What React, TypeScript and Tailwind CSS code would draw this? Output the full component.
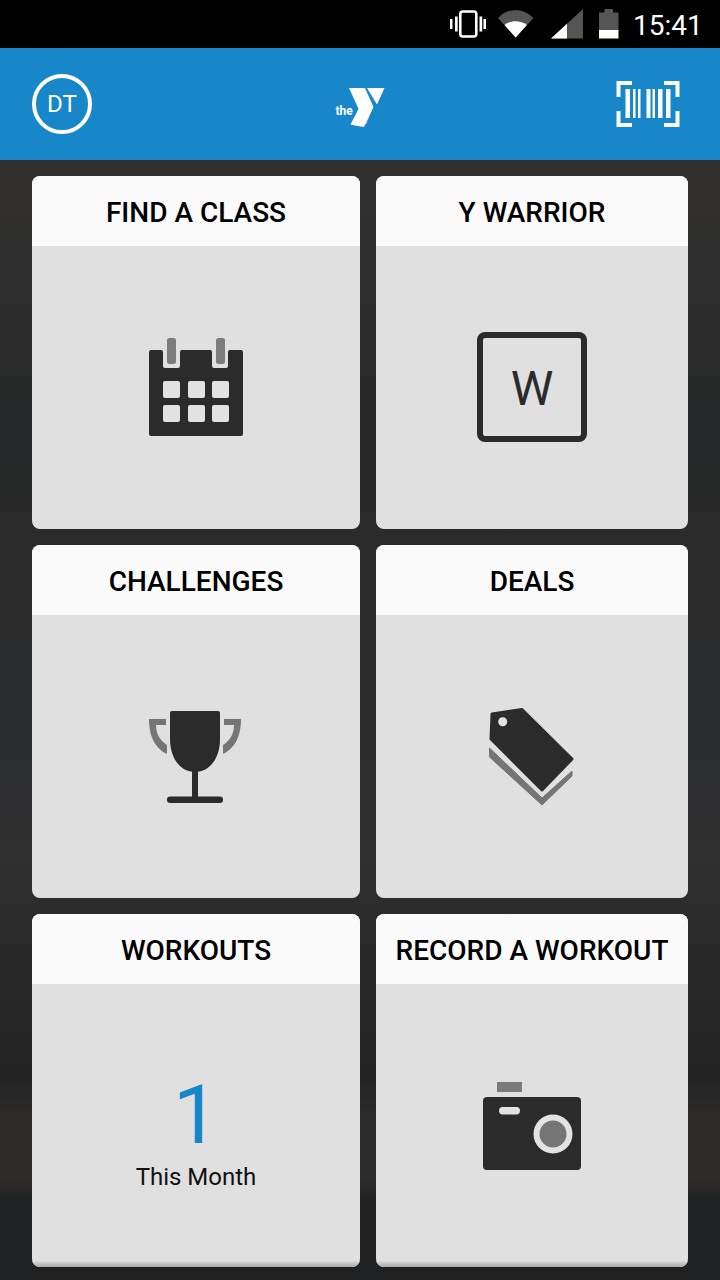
import type { ReactNode } from "react";

const Vibrate = () => (
  <svg width="36" height="28" viewBox="450 10 36 28" fill="#fff">
    <rect x="450" y="19" width="2.5" height="10" />
    <rect x="455" y="16.5" width="2.7" height="15" />
    <rect x="460.3" y="11.5" width="16" height="25" rx="2.5" fill="none" stroke="#fff" strokeWidth="2.6" />
    <rect x="479.5" y="16.5" width="2.7" height="15" />
    <rect x="483.5" y="19" width="2.5" height="10" />
  </svg>
);

const Wifi = () => (
  <svg width="36" height="28" viewBox="499 10 36 28">
    <path d="M499 18 C509 7.5 524 7.5 534.500 18 L516.700 37.500 Z" fill="#555" />
    <path d="M505.500 25 C511.500 20 521.500 20 527.800 25 L516.700 37.500 Z" fill="#fff" />
  </svg>
);

const Signal = () => (
  <svg width="32" height="30" viewBox="552 9 32 30">
    <path d="M552 38.500 L584 9 V38.500 Z" fill="#555" />
    <path d="M552 38.500 L568 23.700 V38.500 Z" fill="#fff" />
  </svg>
);

const Battery = () => (
  <svg width="20" height="30" viewBox="600 9 20 30">
    <path d="M600 12.500 H605.500 V9 H614 V12.500 H619.500 V30 H600 Z" fill="#555" />
    <rect x="600" y="30" width="19.500" height="8.500" fill="#fff" />
  </svg>
);

const Logo = () => (
  <svg width="80" height="60" viewBox="320 70 80 60" fill="#fff">
    <path d="M349 84 H365 L373.500 103 L364 123 Q357 122 350.500 120.500 L358.500 105 Z" />
    <path d="M367 84 H384.500 L377 100.500 Z" />
    <text x="335.500" y="110.500" fontSize="12" fontWeight="700">the</text>
    <text x="366" y="121" fontSize="4" transform="rotate(-70 366 121)">YMCA</text>
  </svg>
);

const Barcode = () => (
  <svg width="64" height="46" viewBox="616 81 64 46" fill="#fff">
    <path d="M632 83 H618.500 V97 M664 83 H677.500 V97 M632 125 H618.500 V111 M664 125 H677.500 V111" fill="none" stroke="#fff" strokeWidth="4" />
    <rect x="625.500" y="89" width="4.500" height="29" />
    <rect x="633" y="89" width="2.500" height="29" />
    <rect x="638" y="89" width="2.500" height="29" />
    <rect x="646.500" y="89" width="4" height="29" />
    <rect x="652.500" y="89" width="2.500" height="29" />
    <rect x="658" y="89" width="4.500" height="29" />
    <rect x="666" y="89" width="4.500" height="29" />
  </svg>
);

const CalendarIcon = () => (
  <svg width="94" height="98" viewBox="0 0 94 98" className="mb-px">
    <path
      d="M0 14 Q0 12 2 12 H12 Q14 12 14 14 V28 Q14 30 16 30 H29 Q31 30 31 28 V14 Q31 12 33 12 H61 Q63 12 63 14 V28 Q63 30 65 30 H77 Q79 30 79 28 V14 Q79 12 81 12 H92 Q94 12 94 14 V96 Q94 98 92 98 H2 Q0 98 0 96 Z"
      fill="#2b2b2b"
    />
    <rect x="18" y="0" width="9" height="26" rx="2.500" fill="#7b7b7b" />
    <rect x="67" y="0" width="9" height="26" rx="2.500" fill="#7b7b7b" />
    {[43, 67].map((y) =>
      [14, 39, 63].map((x) => (
        <rect key={`${x}-${y}`} x={x} y={y} width="17" height="17" rx="2" fill="#e2e2e2" />
      )),
    )}
  </svg>
);

const TrophyIcon = () => (
  <svg width="92" height="92" viewBox="0 0 92 92" className="mr-[2px]">
    <path d="M0 8 H17 V14 H7 C7 24 12 30 18 34 V43 C8 38 0 28 0 8 Z" fill="#757575" />
    <path d="M92 8 H75 V14 H85 C85 24 80 30 74 34 V43 C84 38 92 28 92 8 Z" fill="#757575" />
    <path d="M21 2 Q21 0 23 0 H69 Q71 0 71 2 V28 C71 48 60 61 46 61 C32 61 21 48 21 28 Z" fill="#2b2b2b" />
    <rect x="43" y="60" width="6" height="27" fill="#2b2b2b" />
    <rect x="18" y="85.500" width="56" height="6.500" rx="3" fill="#2b2b2b" />
  </svg>
);

const TagIcon = () => (
  <svg width="86" height="100" viewBox="0 0 86 100" className="mr-[2px]">
    <path
      d="M1.500 41 L54 91 L84 64 V69 L54 98 L1.500 50 Z"
      fill="#757575"
      stroke="#757575"
      strokeWidth="1"
      strokeLinejoin="round"
    />
    <path
      d="M4 7 L34 2.500 L84 52 L54 83 L3 32 Z"
      fill="#2b2b2b"
      stroke="#2b2b2b"
      strokeWidth="3"
      strokeLinejoin="round"
    />
    <circle cx="14.700" cy="14.700" r="4.500" fill="#e2e2e2" />
  </svg>
);

const CameraIcon = () => (
  <svg width="98" height="88" viewBox="0 0 98 88">
    <rect x="14" y="0" width="25" height="10" fill="#7b7b7b" />
    <rect x="0" y="15" width="98" height="73" rx="4" fill="#2b2b2b" />
    <rect x="16" y="25" width="21" height="7.500" rx="3.700" fill="#e2e2e2" />
    <circle cx="70" cy="52" r="19.500" fill="#e2e2e2" />
    <circle cx="70" cy="52" r="13.500" fill="#757575" />
  </svg>
);

const Tile = ({
  title,
  shaded,
  children,
}: {
  title: string;
  shaded?: boolean;
  children: ReactNode;
}) => (
  <div className="relative flex flex-col overflow-hidden rounded-lg bg-[#e0e0e0]">
    <div className="flex h-[70px] items-center justify-center bg-[#fafafa] pt-1 text-[28px] font-medium text-black">
      {title}
    </div>
    <div className="flex flex-1 items-center justify-center">{children}</div>
    {shaded && (
      <div className="absolute inset-x-0 bottom-0 h-[6px] bg-gradient-to-b from-[#dedede] to-[#a6a6a6]" />
    )}
  </div>
);

const App = () => {
  return (
    <div className="flex h-[1280px] w-[720px] flex-col overflow-hidden bg-[#2a2a2a] font-['Roboto',sans-serif]">
      <div className="flex h-12 items-center bg-black pl-[450px] text-white">
        <Vibrate />
        <div className="ml-3">
          <Wifi />
        </div>
        <div className="ml-[17px]">
          <Signal />
        </div>
        <div className="ml-4">
          <Battery />
        </div>
        <span className="ml-[14px] pt-1 text-[28px] leading-none">15:41</span>
      </div>

      <div className="grid h-[112px] grid-cols-[1fr_auto_1fr] items-center bg-[#1787c9] px-8">
        <div className="flex h-[60px] w-[60px] items-center justify-center rounded-full border-4 border-white text-2xl text-white">
          DT
        </div>
        <Logo />
        <div className="mr-2 justify-self-end">
          <Barcode />
        </div>
      </div>

      <div className="flex-1 bg-[linear-gradient(180deg,#33312f_0%,#2e2e2e_10%,#262728_25%,#2b2b2b_35%,#2a2b2d_50%,#303031_62%,#282828_72%,#232323_82%,#2e2c2a_86%,#2e2c2a_91%,#202123_93%,#202123_100%)] pl-8 pt-4">
        <div className="grid grid-cols-[328px_312px] grid-rows-[353px_353px_353px] gap-4">
          <Tile title="FIND A CLASS">
            <CalendarIcon />
          </Tile>
          <Tile title="Y WARRIOR">
            <div className="mb-px flex h-[110px] w-[110px] items-center justify-center rounded-lg border-[6px] border-[#2b2b2b] pt-[3px] text-5xl text-[#2b2b2b]">
              W
            </div>
          </Tile>
          <Tile title="CHALLENGES">
            <TrophyIcon />
          </Tile>
          <Tile title="DEALS">
            <TagIcon />
          </Tile>
          <Tile title="WORKOUTS" shaded>
            <div className="flex flex-col items-center pt-4">
              <span className="text-[82px] leading-[82px] text-[#1787c9]">1</span>
              <span className="mt-[5px] text-2xl text-[#111]">This Month</span>
            </div>
          </Tile>
          <Tile title="RECORD A WORKOUT" shaded>
            <CameraIcon />
          </Tile>
        </div>
      </div>
    </div>
  );
};

export default App;
